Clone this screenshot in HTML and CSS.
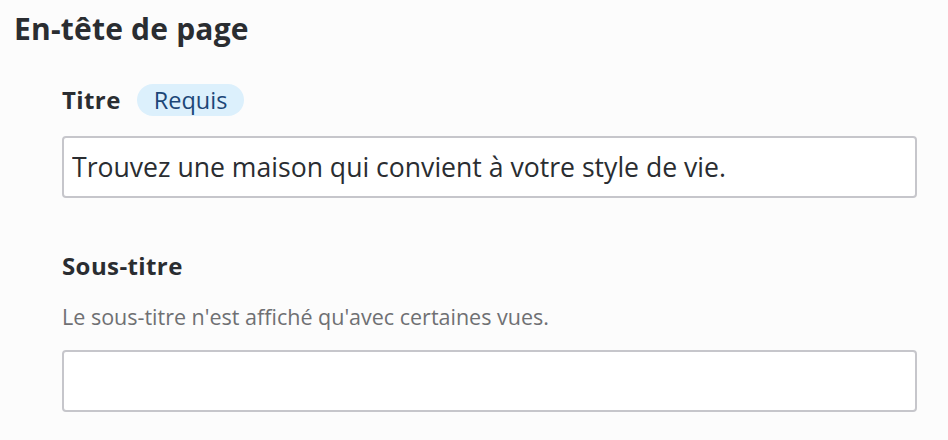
FILE: index.html
```html
<!DOCTYPE html>
<html lang="fr">
<head>
<meta charset="utf-8">
<link rel="stylesheet" href="styles.css">
</head>
<body>
<section class="panel">
  <h2 class="panel-title">En-tête de page</h2>
  <div class="fields">
    <div class="field">
      <div class="field-label-row">
        <label class="field-label" for="titre">Titre</label>
        <span class="badge">Requis</span>
      </div>
      <input class="text-input" id="titre" type="text" value="Trouvez une maison qui convient à votre style de vie.">
    </div>
    <div class="field field-sub">
      <div class="field-label-row">
        <label class="field-label" for="soustitre">Sous-titre</label>
      </div>
      <p class="field-help">Le sous-titre n'est affiché qu'avec certaines vues.</p>
      <input class="text-input" id="soustitre" type="text" value="">
    </div>
  </div>
</section>
</body>
</html>
```
FILE: styles.css
```css
html, body {
  margin: 0;
  padding: 0;
  background: #fcfcfc;
}
body {
  font-family: "Open Sans", "Noto Sans", sans-serif;
  color: #2a2d31;
}
.panel {
  padding: 9px 31px 0 14px;
}
.panel-title {
  margin: 0;
  font-size: 30px;
  line-height: 40px;
  font-weight: 700;
  letter-spacing: 0.2px;
  color: #2a2d31;
}
.fields {
  padding-left: 48px;
  display: flex;
  flex-direction: column;
}
.field {
  display: flex;
  flex-direction: column;
}
.field-label-row {
  display: flex;
  align-items: baseline;
  gap: 16px;
  margin-top: 35px;
  height: 32px;
}
.field-label {
  font-size: 24px;
  line-height: 32px;
  font-weight: 700;
  letter-spacing: 0.4px;
  color: #2a2d31;
}
.badge {
  background: #dcf0fc;
  color: #1b4677;
  font-size: 23.5px;
  line-height: 32px;
  padding: 0 17px;
  border-radius: 16px;
}
.text-input {
  box-sizing: border-box;
  margin: 20px 0 0;
  width: 100%;
  height: 62px;
  border: 2px solid #c6c6cb;
  border-radius: 4px;
  background: #ffffff;
  padding: 0 8px;
  font-family: inherit;
  font-size: 26.6px;
  color: #2a2d31;
  outline: none;
}
.field-sub .field-label-row {
  margin-top: 52px;
}
.field-help {
  margin: 21px 0 0;
  font-size: 21.5px;
  line-height: 28px;
  color: #6f7073;
}
.field-sub .text-input {
  margin-top: 19px;
}
```
